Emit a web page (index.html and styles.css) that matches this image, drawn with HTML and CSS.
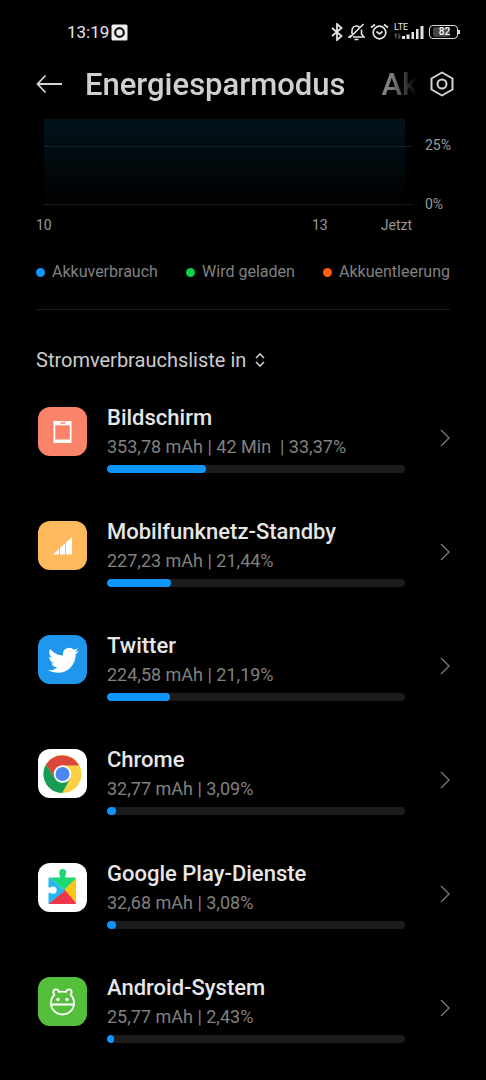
FILE: index.html
```html
<!DOCTYPE html>
<html lang="de">
<head>
  <meta charset="UTF-8">
  <meta name="viewport" content="width=device-width, initial-scale=1">
  <title>Energiesparmodus</title>
  <link rel="stylesheet" href="styles.css">
</head>
<body>
  <div class="status">
    <span class="clock">13:19</span>
    <svg class="rec" width="17" height="17" viewBox="0 0 17 17">
      <rect x="0.5" y="0.5" width="16" height="16" rx="1.5" fill="#eee"/>
      <circle cx="8.5" cy="8.5" r="4.3" fill="none" stroke="#111" stroke-width="2.2"/>
    </svg>
    <div class="status-right">
      <svg width="12" height="18" viewBox="0 0 12 18" fill="none" stroke="#e4e4e4" stroke-width="1.8">
        <path d="M1 5l9.500 8L6 17V1l4.500 4L1 13"/>
      </svg>
      <svg width="17" height="18" viewBox="0 0 17 18" fill="none" stroke="#e4e4e4" stroke-width="1.600">
        <path d="M4 11V8c0-3 2-5 4.500-5 1 0 2 .4 2.800 1M13.500 6.500V11l2.500 3H5M3.500 12L1 14h2M6.500 16.500h4M15.500 1L1.500 15"/>
      </svg>
      <svg width="19" height="18" viewBox="0 0 19 18" fill="none" stroke="#e4e4e4" stroke-width="1.700">
        <circle cx="9.500" cy="9.500" r="6.300"/>
        <path d="M6.500 8.500l3 2.500 3-2.500M1 4.500L5 1.500M18 4.500L14 1.500"/>
      </svg>
      <div class="signal">
        <span class="lte">LTE</span>
        <svg width="30" height="16" viewBox="0 0 30 16" fill="#e4e4e4">
          <path d="M8 12h3v3H8zM12.500 10.500h3V15h-3zM17.500 8h2.500v7h-2.500zM22 5h2.500v10H22zM26.500 2h3v13h-3z"/>
          <path d="M2 9.500v5M0.500 11.500L2 9.500M5 9.500v5M6.500 12.500L5 14.500" fill="none" stroke="#777"/>
        </svg>
      </div>
      <div class="battery"><span class="level">82</span></div>
    </div>
  </div>

  <header class="header">
    <button class="icon-btn" type="button" aria-label="Zurück">
      <svg width="27" height="20" viewBox="0 0 27 20" fill="none" stroke="#d4d4d4" stroke-width="1.800">
        <path d="M26 10H1.500M9.500 1.500L1.500 10l8 8.500"/>
      </svg>
    </button>
    <div class="tabs">
      <h1 class="tab active">Energiesparmodus</h1>
      <span class="tab next">Ak</span>
    </div>
    <button class="icon-btn" type="button" aria-label="Einstellungen">
      <svg width="24" height="26" viewBox="0 0 24 26" fill="none" stroke="#d4d4d4" stroke-width="2" stroke-linejoin="round">
        <path d="M12 1.500l10.500 6v11L12 24.500l-10.500-6v-11z"/>
        <circle cx="12" cy="13" r="4.500"/>
      </svg>
    </button>
  </header>

  <main class="content">
    <section class="chart">
      <div class="plot">
        <div class="area"></div>
      </div>
      <div class="y-axis">
        <span>25%</span>
        <span>0%</span>
      </div>
      <div class="x-axis">
        <span>10</span>
        <span class="hour">13</span>
        <span>Jetzt</span>
      </div>
    </section>

    <ul class="legend">
      <li class="use">Akkuverbrauch</li>
      <li class="charge">Wird geladen</li>
      <li class="drain">Akkuentleerung</li>
    </ul>

    <div class="sort">
      <select class="sort-select" aria-label="Sortierung">
        <option>Stromverbrauchsliste in</option>
      </select>
      <svg width="10" height="14" viewBox="0 0 10 14" fill="none" stroke="#ccc" stroke-width="1.600">
        <path d="M1 5l4-4 4 4M1 9l4 4 4-4"/>
      </svg>
    </div>

    <div class="list">
      <a class="row" href="#">
        <svg class="app-icon" viewBox="0 0 49 49">
          <rect width="49" height="49" rx="12" fill="#fa846a"/>
          <path fill="#fff" fill-rule="evenodd" d="M15.500 14h18v22h-18zM17.300 18.300v14.200h14.500V18.300zM22.500 15.200v1.500h5v-1.500z"/>
        </svg>
        <div class="info">
          <div class="name">Bildschirm</div>
          <div class="meta">353,78 mAh | 42 Min&nbsp; | 33,37%</div>
          <div class="bar"><div class="fill" style="width: 33.37%"></div></div>
        </div>
        <svg class="chevron" viewBox="0 0 10 18"><path d="M1 1l8 8-8 8"/></svg>
      </a>

      <a class="row" href="#">
        <svg class="app-icon" viewBox="0 0 49 49">
          <rect width="49" height="49" rx="12" fill="#fdb95c"/>
          <path fill="#fff" d="M15 33.500L34 16v17.500z"/>
          <path stroke="#fdb95c" d="M21.500 20v14M27.500 16v18" fill="none"/>
        </svg>
        <div class="info">
          <div class="name">Mobilfunknetz-Standby</div>
          <div class="meta">227,23 mAh | 21,44%</div>
          <div class="bar"><div class="fill" style="width: 21.44%"></div></div>
        </div>
        <svg class="chevron" viewBox="0 0 10 18"><path d="M1 1l8 8-8 8"/></svg>
      </a>

      <a class="row" href="#">
        <svg class="app-icon" viewBox="0 0 49 49">
          <rect width="49" height="49" rx="12" fill="#1f97ec"/>
          <path fill="#fff" transform="translate(10 10) scale(1.280)" d="M23.953 4.570a10 10 0 01-2.825.775 4.958 4.958 0 002.163-2.723c-.951.555-2.005.959-3.127 1.184a4.920 4.920 0 00-8.384 4.482C7.690 8.095 4.067 6.130 1.640 3.162a4.822 4.822 0 00-.666 2.475c0 1.710.870 3.213 2.188 4.096a4.904 4.904 0 01-2.228-.616v.060a4.923 4.923 0 003.946 4.827 4.996 4.996 0 01-2.212.085 4.936 4.936 0 004.604 3.417 9.867 9.867 0 01-6.102 2.105c-.390 0-.779-.023-1.170-.067a13.995 13.995 0 007.557 2.209c9.053 0 13.998-7.496 13.998-13.985 0-.210 0-.420-.015-.630A9.935 9.935 0 0024 4.590z"/>
        </svg>
        <div class="info">
          <div class="name">Twitter</div>
          <div class="meta">224,58 mAh | 21,19%</div>
          <div class="bar"><div class="fill" style="width: 21.19%"></div></div>
        </div>
        <svg class="chevron" viewBox="0 0 10 18"><path d="M1 1l8 8-8 8"/></svg>
      </a>

      <a class="row" href="#">
        <svg class="app-icon" viewBox="0 0 49 49">
          <rect width="49" height="49" rx="12" fill="#fff"/>
          <circle cx="24.500" cy="25" r="19" fill="#fdd043"/>
          <path fill="#d9483b" d="M8 15.500A19 19 0 0 1 41 16.500H24.500L17 29.500z"/>
          <path fill="#169c56" d="M8 15.500A19 19 0 0 0 24.300 44L32 29.500 24.500 25l-7.500 4.500z"/>
          <circle cx="24.500" cy="25" r="8.800" fill="#fff"/>
          <circle cx="24.500" cy="25" r="7" fill="#4a87f0"/>
        </svg>
        <div class="info">
          <div class="name">Chrome</div>
          <div class="meta">32,77 mAh | 3,09%</div>
          <div class="bar"><div class="fill" style="width: 3.09%"></div></div>
        </div>
        <svg class="chevron" viewBox="0 0 10 18"><path d="M1 1l8 8-8 8"/></svg>
      </a>

      <a class="row" href="#">
        <svg class="app-icon" viewBox="0 0 49 49">
          <rect width="49" height="49" rx="12" fill="#fff"/>
          <path fill="#1bd873" d="M11.500 14.500h10.500c1-1.500-.8-2.500-.8-5a3.500 3.500 0 0 1 7 0c0 2.500-1.800 3.500-.8 5H37q1 0 1 1L26.500 27z"/>
          <path fill="#fbc614" d="M38 15V41L26 27.500z"/>
          <path fill="#f0364b" d="M10.500 41L26 26l12 14q0 1-1 1z"/>
          <path fill="#24b8f0" d="M10.500 15.500q0-1 1-1L27 27.500 10.500 41v-11c1.500-1 2.500.8 4.500.8a3.700 3.700 0 0 0 0-7.400c-2 0-3 1.800-4.500.8z"/>
        </svg>
        <div class="info">
          <div class="name">Google Play-Dienste</div>
          <div class="meta">32,68 mAh | 3,08%</div>
          <div class="bar"><div class="fill" style="width: 3.08%"></div></div>
        </div>
        <svg class="chevron" viewBox="0 0 10 18"><path d="M1 1l8 8-8 8"/></svg>
      </a>

      <a class="row" href="#">
        <svg class="app-icon" viewBox="0 0 49 49">
          <rect width="49" height="49" rx="12" fill="#54bf3a"/>
          <g fill="none" stroke="#fff" stroke-width="1.800" stroke-linecap="round" stroke-linejoin="round">
            <path d="M16.500 17.500c-2-1.500-1.500-4.500.8-5 2-.4 3.500 1 3.700 2.500a14 14 0 0 1 7 0c.2-1.500 1.700-2.900 3.700-2.500 2.300.5 2.800 3.500.8 5 2.500 2.500 3.500 5.500 3.500 8.500 0 6.500-5 11.500-11.500 11.500S13 32.500 13 26c0-3 1-6 3.500-8.500z"/>
            <path d="M13 27.500h23"/>
          </g>
          <circle cx="20" cy="22.500" r="1.700" fill="#fff"/>
          <circle cx="29" cy="22.500" r="1.700" fill="#fff"/>
        </svg>
        <div class="info">
          <div class="name">Android-System</div>
          <div class="meta">25,77 mAh | 2,43%</div>
          <div class="bar"><div class="fill" style="width: 2.43%"></div></div>
        </div>
        <svg class="chevron" viewBox="0 0 10 18"><path d="M1 1l8 8-8 8"/></svg>
      </a>
    </div>
  </main>
</body>
</html>
```
FILE: styles.css
```css
* {
  box-sizing: border-box;
}
body {
  margin: 0;
  background: #000;
  color: #e6e6e6;
  font-family: Roboto, "Noto Sans", sans-serif;
}
svg {
  display: block;
  flex: none;
}

/* status bar */
.status {
  display: flex;
  align-items: center;
  height: 48px;
  padding: 16px 28px 0 67px;
}
.clock {
  font-size: 17px;
  line-height: 20px;
}
.rec {
  margin-left: 2px;
}
.status-right {
  display: flex;
  align-items: center;
  gap: 5px;
  margin-left: auto;
}
.signal {
  position: relative;
}
.lte {
  position: absolute;
  top: -2px;
  left: 0;
  font-size: 9px;
  line-height: 10px;
}
.battery {
  position: relative;
  width: 29px;
  height: 14px;
  padding: 1px 3px;
  border: 1px solid #ddd;
  border-radius: 4px;
}
.battery::after {
  content: "";
  position: absolute;
  top: 4px;
  right: -3px;
  width: 2px;
  height: 4px;
  background: #ddd;
}
.level {
  display: block;
  width: 82%;
  border-radius: 2px;
  background: #444;
  color: #fff;
  font-size: 10px;
  font-weight: 500;
  line-height: 10px;
  text-align: right;
}

/* header */
.header {
  display: flex;
  align-items: center;
  height: 71px;
  padding: 0 32px 0 36px;
}
.icon-btn {
  flex: none;
  padding: 0;
  border: 0;
  background: none;
}
.tabs {
  display: flex;
  flex: 1;
  gap: 36px;
  margin: 0 10px 0 22px;
  padding-top: 2px;
  overflow: hidden;
  -webkit-mask-image: linear-gradient(to left, transparent 4px, #000 28px);
  mask-image: linear-gradient(to left, transparent 4px, #000 28px);
}
.tab {
  margin: 0;
  font-size: 31px;
  font-weight: 500;
  line-height: 40px;
}
.active {
  color: #d0d0d0;
}
.next {
  color: #808080;
}

.content {
  padding: 0 36px 16px;
}

/* chart */
.chart {
  display: grid;
  grid-template-columns: 1fr 38px;
  color: #999;
  font-size: 14px;
  line-height: 16px;
}
.plot {
  height: 86px;
  margin-left: 8px;
  border-bottom: 1px dotted #333;
}
.area {
  height: 85px;
  margin-right: 7px;
  background: linear-gradient(#02131c, #000);
}
.area::before {
  content: "";
  display: block;
  height: 27px;
  margin-right: -7px;
  border-bottom: 1px dotted #2b343a;
}
.y-axis {
  display: flex;
  flex-direction: column;
  justify-content: space-between;
  padding: 18px 0 0 13px;
  margin-bottom: -7px;
}
.x-axis {
  display: flex;
  justify-content: space-between;
  margin-top: 12px;
}
.hour {
  margin-left: auto;
  margin-right: 53px;
}

.legend {
  display: flex;
  justify-content: space-between;
  margin: 0;
  padding: 29px 0 27px;
  border-bottom: 1px solid #1c1c1c;
  list-style: none;
  color: #808080;
  font-size: 16px;
  line-height: 20px;
}
.legend li {
  display: flex;
  align-items: center;
  gap: 7px;
}
.legend li::before {
  content: "";
  width: 9px;
  height: 9px;
  border-radius: 50%;
}
.use::before {
  background: #0d96ff;
}
.charge::before {
  background: #0fce4b;
}
.drain::before {
  background: #ff5d0c;
}

.sort {
  display: flex;
  align-items: center;
  gap: 8px;
  padding: 38px 0 31px;
}
.sort-select {
  appearance: none;
  padding: 0;
  border: 0;
  background: none;
  color: #ccc;
  font-family: inherit;
  font-size: 20px;
  line-height: 24px;
}

/* app list */
.row {
  display: flex;
  align-items: center;
  height: 114px;
  padding: 0 0 44px 2px;
  color: inherit;
  text-decoration: none;
}
.app-icon {
  align-self: flex-start;
  width: 49px;
  height: 49px;
  margin-top: 4px;
}
.info {
  flex: 1;
  margin: 0 35px 0 20px;
}
.name {
  font-size: 22px;
  font-weight: 500;
  line-height: 30px;
}
.meta {
  color: #808080;
  font-size: 18px;
  line-height: 28px;
}
.bar {
  height: 8px;
  margin-top: 4px;
  border-radius: 4px;
  background: #1c1c1c;
  overflow: hidden;
}
.fill {
  height: 8px;
  border-radius: 4px;
  background: #0d96ff;
}
.chevron {
  width: 10px;
  height: 18px;
  fill: none;
  stroke: #777;
  stroke-width: 1.4;
}
```
